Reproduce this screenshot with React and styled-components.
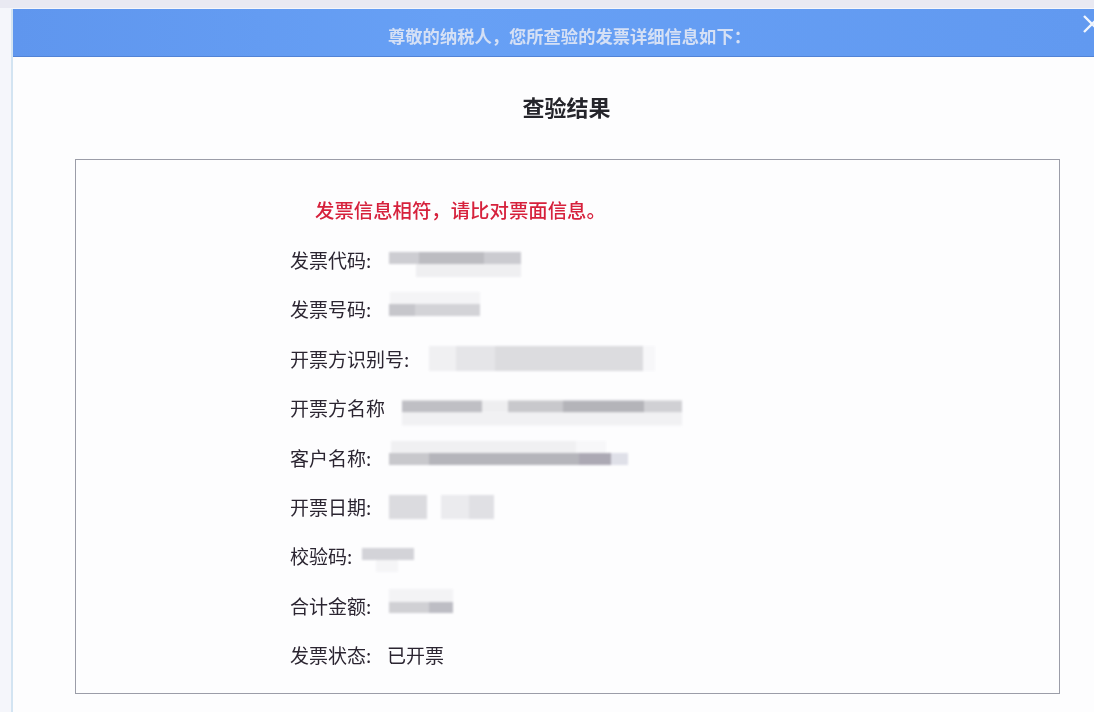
import React from 'react'
import styled, { createGlobalStyle } from 'styled-components'

const GlobalStyle = createGlobalStyle`
  html, body {
    margin: 0;
    padding: 0;
    height: 712px;
    overflow: hidden;
    background: #f5f6fb;
    font-family: "Noto Sans CJK SC", "Liberation Sans", sans-serif;
  }
`

const rows = [
  {
    label: '发票代码:',
    offset: 99,
    lift: 3,
    smudges: [
      { lines: [
        { pad: 0, height: 12, parts: [[30, '#cdcdd2'], [65, '#bcbcc1'], [37, '#cbcbd0']] },
        { pad: 27, height: 13, parts: [[105, '#efeff1']] },
      ] },
    ],
  },
  {
    label: '发票号码:',
    offset: 99,
    lift: -6,
    smudges: [
      { lines: [
        { pad: 1, height: 12, parts: [[90, '#f4f4f6']] },
        { pad: 0, height: 12, parts: [[26, '#c6c6cb'], [65, '#d3d3d7']] },
      ] },
    ],
  },
  {
    label: '开票方识别号:',
    offset: 139,
    lift: -1,
    smudges: [
      { lines: [
        { pad: 0, height: 25, parts: [[27, '#f0f0f2'], [39, '#e5e5e8'], [148, '#dcdcdf'], [12, '#f7f7f9']] },
      ] },
    ],
  },
  {
    label: '开票方名称',
    offset: 112,
    lift: 3.5,
    smudges: [
      { lines: [
        { pad: 0, height: 12, parts: [[80, '#bfbfc4'], [26, '#eeeef0'], [55, '#c8c8cc'], [81, '#b4b4b9'], [38, '#d0d0d4']] },
        { pad: 0, height: 13, parts: [[280, '#f1f1f3']] },
      ] },
    ],
  },
  {
    label: '客户名称:',
    offset: 99,
    lift: -6,
    smudges: [
      { lines: [
        { pad: 2, height: 12, parts: [[185, '#f0f0f2'], [30, '#f7f7f9']] },
        { pad: 0, height: 12, parts: [[40, '#c8c8cc'], [150, '#b5b5bb'], [32, '#aca9b4'], [17, '#dfe0e8']] },
      ] },
    ],
  },
  {
    label: '开票日期:',
    offset: 99,
    gap: 14,
    lift: -1,
    smudges: [
      { lines: [{ pad: 0, height: 24, parts: [[38, '#dbdbdf']] }] },
      { lines: [{ pad: 0, height: 24, parts: [[28, '#ebebee'], [25, '#e0e0e4']] }] },
    ],
  },
  {
    label: '校验码:',
    offset: 72,
    lift: 3,
    smudges: [
      { lines: [
        { pad: 0, height: 12, parts: [[52, '#d3d3d8']] },
        { pad: 14, height: 12, parts: [[22, '#f5f5f7']] },
      ] },
    ],
  },
  {
    label: '合计金额:',
    offset: 99,
    lift: -6,
    smudges: [
      { lines: [
        { pad: 0, height: 13, parts: [[64, '#f3f3f5']] },
        { pad: 0, height: 11, parts: [[40, '#d0d0d4'], [24, '#bdbdc4']] },
      ] },
    ],
  },
]

const Page = styled.div`
  height: 712px;
  padding: 9px 0 0 11px;
  box-sizing: border-box;
  background: linear-gradient(#e9e9f2 0 8px, #f5f6fb 8px);
  overflow: hidden;
`

const Modal = styled.div`
  height: 703px;
  border-left: 2px solid #d3e4f2;
  background: #fdfdfe;
`

const Header = styled.header`
  position: relative;
  height: 48px;
  box-sizing: border-box;
  display: flex;
  align-items: center;
  justify-content: center;
  padding: 5px 0 0 32px;
  background: linear-gradient(90deg, #5f96ee, #67a0f5 40%, #6199f0);
  border-bottom: 1px solid #5283d6;
  color: #d5e0f5;
  font-size: 17.3px;
  font-weight: 700;
  filter: blur(0.6px);
`

const Close = styled.svg`
  position: absolute;
  top: 6px;
  right: -2px;
  width: 13px;
  height: 18px;
`

const Title = styled.h1`
  margin: 0;
  height: 102px;
  box-sizing: border-box;
  display: flex;
  align-items: center;
  justify-content: center;
  padding: 0 0 4px 26px;
  font-size: 22px;
  font-weight: 700;
  color: #25252b;
  filter: blur(0.5px);
`

const ResultBox = styled.section`
  width: 985px;
  height: 535px;
  margin-left: 62px;
  box-sizing: border-box;
  padding: 27px 0 0 214px;
  border: 1px solid #9b9da8;
`

const Notice = styled.p`
  margin: 0;
  height: 49.4px;
  box-sizing: border-box;
  display: flex;
  align-items: center;
  padding: 0 0 4px 25px;
  font-size: 19.4px;
  font-weight: 500;
  color: #d6213c;
  filter: blur(0.6px);
`

const Row = styled.div`
  height: 49.4px;
  display: flex;
  align-items: center;
`

const Label = styled.span`
  flex: none;
  width: ${(p) => p.$width}px;
  padding-bottom: 3px;
  white-space: nowrap;
  font-size: 19px;
  color: #2b2531;
  filter: blur(0.6px);
`

const Value = styled.span`
  padding-bottom: 3px;
  font-size: 19px;
  color: #2b2531;
  white-space: nowrap;
  filter: blur(0.6px);
`

const Smudges = styled.div`
  display: flex;
  gap: ${(p) => p.$gap || 0}px;
  transform: translateY(${(p) => p.$lift || 0}px);
  filter: blur(0.8px);
`

const SmudgeBlock = styled.div`
  display: flex;
  flex-direction: column;
`

const SmudgeLine = styled.div`
  display: flex;
  height: ${(p) => p.$height}px;
  padding-left: ${(p) => p.$pad}px;
`

const SmudgePart = styled.i`
  display: block;
  width: ${(p) => p.$width}px;
  background: ${(p) => p.$color};
`

const App = () => {
  return (
    <Page>
      <GlobalStyle />
      <Modal>
        <Header>
          尊敬的纳税人，您所查验的发票详细信息如下：
          <Close viewBox='0 0 13 18'>
            <path d='M1 1 L13 13 M1 17 L13 5' stroke='#f2f6fd' strokeWidth='2.4' fill='none' />
          </Close>
        </Header>
        <Title>查验结果</Title>
        <ResultBox>
          <Notice>发票信息相符，请比对票面信息。</Notice>
          {rows.map((row) => {
            return (
              <Row key={row.label}>
                <Label $width={row.offset}>{row.label}</Label>
                <Smudges $gap={row.gap} $lift={row.lift}>
                  {row.smudges.map((smudge, index) => {
                    return (
                      <SmudgeBlock key={index}>
                        {smudge.lines.map((line, lineIndex) => {
                          return (
                            <SmudgeLine key={lineIndex} $height={line.height} $pad={line.pad}>
                              {line.parts.map(([width, color], partIndex) => {
                                return <SmudgePart key={partIndex} $width={width} $color={color} />
                              })}
                            </SmudgeLine>
                          )
                        })}
                      </SmudgeBlock>
                    )
                  })}
                </Smudges>
              </Row>
            )
          })}
          <Row>
            <Label $width={97}>发票状态:</Label>
            <Value>已开票</Value>
          </Row>
        </ResultBox>
      </Modal>
    </Page>
  )
}

export default App
